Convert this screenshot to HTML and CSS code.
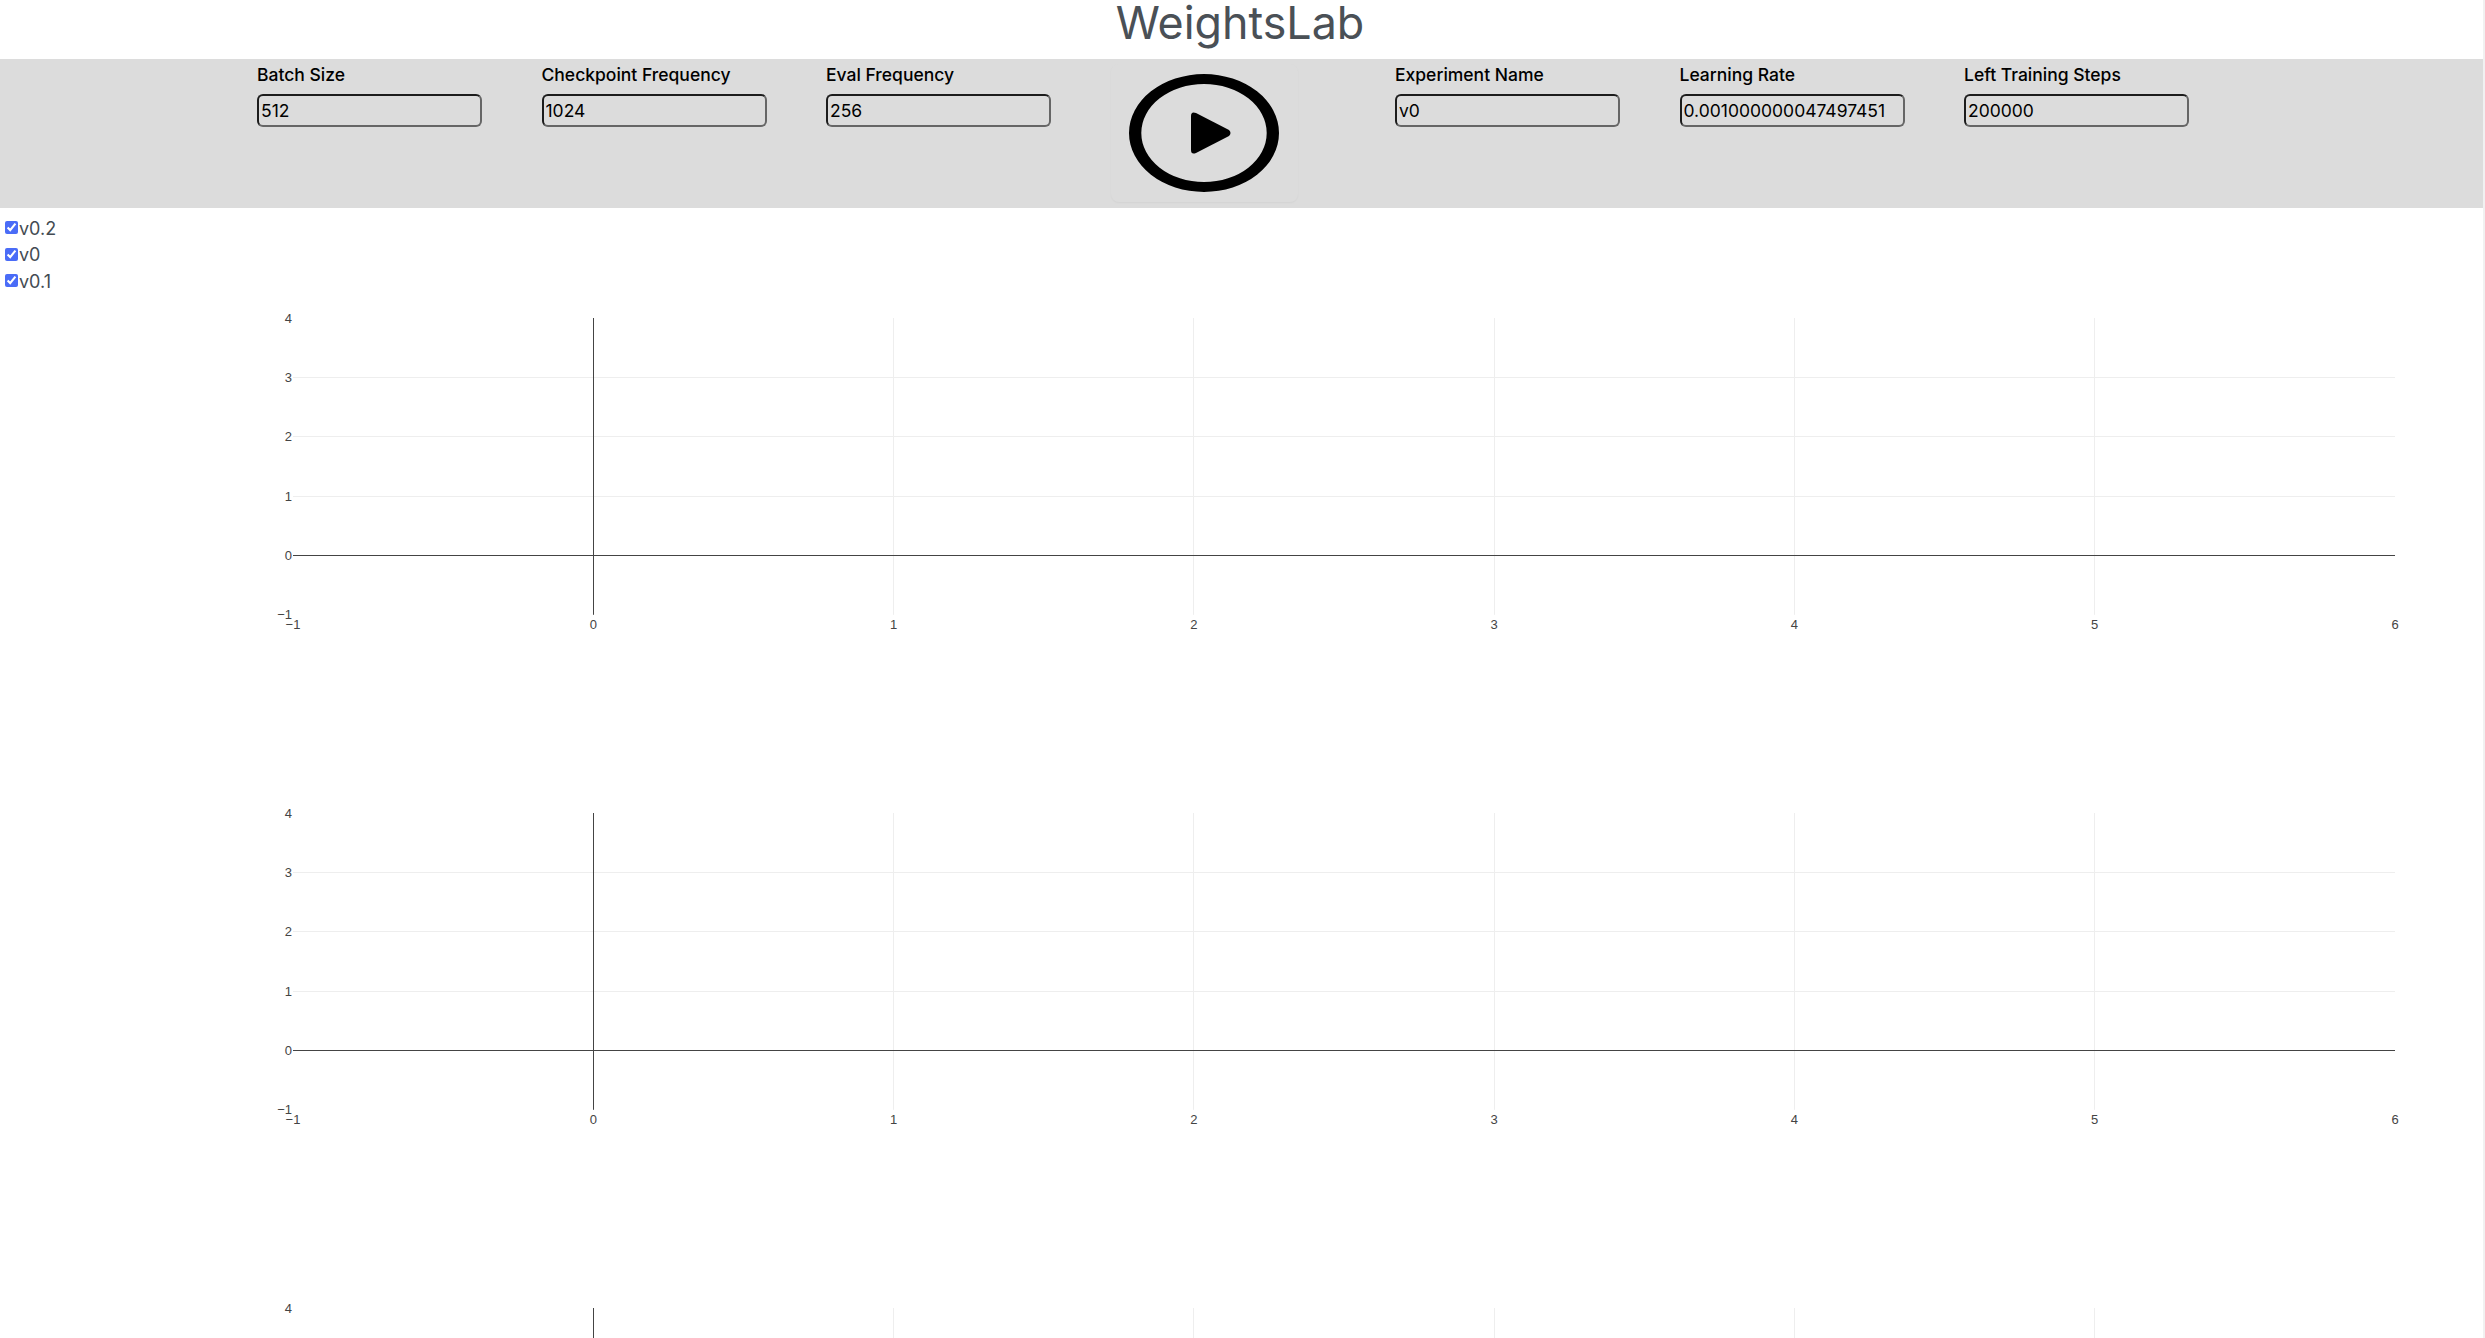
FILE: index.html
```html
<!DOCTYPE html>
<html lang="en">
<head>
<meta charset="utf-8">
<title>WeightsLab</title>
<link rel="stylesheet" href="styles.css">
</head>
<body>
<div class="page">
  <h1 class="title">WeightsLab</h1>
  <section class="toolbar">
    <div class="fields">
      <label class="field"><span>Batch Size</span><input value="512"></label>
      <label class="field"><span>Checkpoint Frequency</span><input value="1024"></label>
      <label class="field"><span>Eval Frequency</span><input value="256"></label>
    </div>
    <button class="play" aria-label="Play">
      <svg width="150" height="118" viewBox="0 0 150 118">
        <path fill-rule="evenodd" d="M0 59a75 59 0 1 0 150 0a75 59 0 1 0 -150 0Z M12.3 59a62.7 49 0 1 0 125.4 0a62.7 49 0 1 0 -125.4 0Z" fill="#000"/>
        <path d="M62 42 Q62 37 67 39 L100 56 Q103 59 100 62 L67 79 Q62 81 62 76 Z" fill="#000"/>
      </svg>
    </button>
    <div class="fields">
      <label class="field"><span>Experiment Name</span><input value="v0"></label>
      <label class="field"><span>Learning Rate</span><input value="0.001000000047497451"></label>
      <label class="field"><span>Left Training Steps</span><input value="200000"></label>
    </div>
  </section>
  <ul class="legend">
    <li><input type="checkbox" checked><span>v0.2</span></li>
    <li><input type="checkbox" checked><span>v0</span></li>
    <li><input type="checkbox" checked><span>v0.1</span></li>
  </ul>
  <div class="charts" id="charts"></div>
</div>
<script src="chart.js"></script>
</body>
</html>
```
FILE: styles.css
```css
html, body { margin: 0; padding: 0; height: 100%; overflow: hidden; }
body { background: #f1f1f1; font-family: Inter, "Liberation Sans", sans-serif; }
.page { width: 2483px; height: 100%; background: #fff; }
.title { margin: 0; height: 59px; padding-right: 3px; font-size: 44.8px; line-height: 46px; font-weight: 400; color: #4a5056; text-align: center; box-sizing: border-box; }
.toolbar { height: 149px; background: #dcdcdc; display: flex; padding-left: 257px; box-sizing: border-box; }
.fields { display: flex; gap: 59.5px; padding-top: 2px; }
.field { display: flex; flex-direction: column; width: 225px; }
.field span { font-size: 17.5px; line-height: 28px; font-weight: 500; color: #000; margin-bottom: 5px; }
.field input { box-sizing: border-box; width: 225px; height: 33px; padding: 0 2px; background: transparent; border: 2px solid; border-color: #1c1c1c #666 #666 #1c1c1c; border-radius: 6px; font: 400 17.5px Inter, sans-serif; color: #000; outline: none; }
.play { width: 187px; height: 138px; margin: 5px 97.5px 0 59.5px; padding: 0; background: #dcdcdc; border: 0; border-radius: 8px; box-shadow: 0 1px 2px rgba(0,0,0,.04); display: flex; align-items: center; justify-content: center; }
.legend { list-style: none; margin: 8px 0 0; padding: 0; height: 83px; font-size: 18px; color: #444b52; }
.legend li { display: flex; align-items: center; height: 26.5px; }
.legend li span { position: relative; top: -1px; margin-left: 1px; }
.legend input { width: 13px; height: 13px; margin: 0 0 3px 5px; accent-color: #4a6cf7; }
.chart { display: block; }
.charts { margin-top: 4px; }
.grid { stroke: #eeeeee; stroke-width: 1; }
.axis { stroke: #444; stroke-width: 1; }
.tick { font-family: "Liberation Sans", Arial, sans-serif; font-size: 13px; fill: #444; }
```
FILE: chart.js
```js
var NS = 'http://www.w3.org/2000/svg';
var host = document.getElementById('charts');
var X0 = 293, XU = 300.29, Y0 = 252.5, YU = 59.3, TOP = 15;
function add(svg, name, attrs, text) {
  var el = document.createElementNS(NS, name);
  Object.keys(attrs).forEach(function (k) { el.setAttribute(k, attrs[k]); });
  if (text !== undefined) el.textContent = text;
  svg.appendChild(el);
}
function label(n) { return n < 0 ? '\u2212' + (-n) : String(n); }
function snap(v) { return Math.floor(v) + 0.5; }
for (var c = 0; c < 3; c++) {
  var svg = document.createElementNS(NS, 'svg');
  svg.setAttribute('class', 'chart');
  svg.setAttribute('width', 2483);
  svg.setAttribute('height', 495);
  var bottom = Y0 + YU;
  for (var x = -1; x <= 6; x++) {
    var px = X0 + (x + 1) * XU;
    if (x > 0 && x < 6) add(svg, 'line', {class: 'grid', x1: snap(px), x2: snap(px), y1: TOP, y2: bottom});
    add(svg, 'text', {class: 'tick', x: px, y: bottom + 14.5, 'text-anchor': 'middle'}, label(x));
  }
  for (var y = -1; y <= 4; y++) {
    var py = Y0 - y * YU;
    if (y > 0 && y < 4) add(svg, 'line', {class: 'grid', x1: X0, x2: X0 + 7 * XU, y1: snap(py), y2: snap(py)});
    add(svg, 'text', {class: 'tick', x: X0 - 1, y: py + 4.5, 'text-anchor': 'end'}, label(y));
  }
  add(svg, 'line', {class: 'axis', x1: X0, x2: X0 + 7 * XU, y1: Y0, y2: Y0});
  add(svg, 'line', {class: 'axis', x1: 593.5, x2: 593.5, y1: TOP, y2: bottom});
  host.appendChild(svg);
}
```
